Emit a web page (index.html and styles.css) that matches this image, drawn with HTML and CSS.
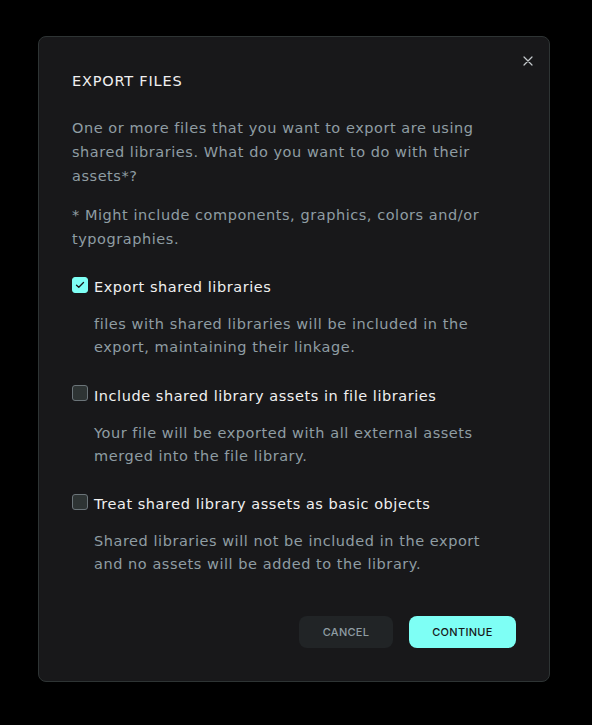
FILE: index.html
```html
<!DOCTYPE html>
<html lang="en">
<head>
<meta charset="utf-8">
<link rel="stylesheet" href="styles.css">
</head>
<body>
<div class="modal">
  <button class="close" aria-label="Close">
    <svg width="10" height="10" viewBox="0 0 10 10"><path d="M1 1L9 9M9 1L1 9" stroke="#c4c9cc" stroke-width="1.2" stroke-linecap="round"/></svg>
  </button>
  <h2 class="title">EXPORT FILES</h2>
  <p class="text">One or more files that you want to export are using shared libraries. What do you want to do with their assets*?</p>
  <p class="text note">* Might include components, graphics, colors and/or typographies.</p>
  <div class="options">
    <div class="option">
      <div class="label-row">
        <span class="check checked">
          <svg width="10" height="8" viewBox="0 0 10 8"><path d="M1.5 4.2L3.8 6.3L8.5 1.5" fill="none" stroke="#18181a" stroke-width="1.3" stroke-linecap="round" stroke-linejoin="round"/></svg>
        </span>
        <span class="label">Export shared libraries</span>
      </div>
      <p class="desc">files with shared libraries will be included in the export, maintaining their linkage.</p>
    </div>
    <div class="option">
      <div class="label-row">
        <span class="check"></span>
        <span class="label">Include shared library assets in file libraries</span>
      </div>
      <p class="desc">Your file will be exported with all external assets merged into the file library.</p>
    </div>
    <div class="option">
      <div class="label-row">
        <span class="check"></span>
        <span class="label">Treat shared library assets as basic objects</span>
      </div>
      <p class="desc">Shared libraries will not be included in the export and no assets will be added to the library.</p>
    </div>
  </div>
  <div class="actions">
    <button class="btn cancel">CANCEL</button>
    <button class="btn primary">CONTINUE</button>
  </div>
</div>
</body>
</html>
```
FILE: styles.css
```css
html, body {
  margin: 0;
  padding: 0;
  background: #000;
}
body {
  width: 592px;
  height: 725px;
  font-family: "DejaVu Sans", "Open Sans", sans-serif;
  overflow: hidden;
}
.modal {
  position: relative;
  box-sizing: border-box;
  margin: 36px 0 0 38px;
  width: 512px;
  height: 646px;
  background: #18181a;
  border: 1px solid #2e3434;
  border-radius: 8px;
  padding: 32px 33px 0 33px;
}
.close {
  position: absolute;
  top: 16px;
  right: 13px;
  width: 16px;
  height: 16px;
  padding: 0;
  border: 0;
  background: transparent;
  display: flex;
  align-items: center;
  justify-content: center;
}
.title {
  margin: 0 0 23px 0;
  font-size: 14.5px;
  line-height: 24px;
  font-weight: 400;
  color: #f0f0f0;
  letter-spacing: 0.8px;
}
.text {
  margin: 0;
  font-size: 14.5px;
  line-height: 24px;
  letter-spacing: 0.55px;
  color: #8f9da3;
  width: 430px;
}
.note {
  margin-top: 15px;
}
.options {
  display: flex;
  flex-direction: column;
  gap: 24.5px;
  margin-top: 24px;
}
.label-row {
  display: flex;
  align-items: center;
  gap: 6px;
  height: 24px;
}
.check {
  box-sizing: border-box;
  width: 16px;
  height: 16px;
  border: 1px solid #6b7479;
  border-radius: 3px;
  background: #2e3434;
  display: flex;
  align-items: center;
  justify-content: center;
  margin-top: -5px;
}
.check.checked {
  background: #7efff5;
  border-color: #7efff5;
}
.label {
  font-size: 14.5px;
  line-height: 24px;
  letter-spacing: 0.55px;
  color: #f0f0f0;
}
.desc {
  margin: 14px 0 0 22px;
  font-size: 14.5px;
  line-height: 23px;
  letter-spacing: 0.55px;
  color: #8f9da3;
  width: 410px;
}
.actions {
  display: flex;
  justify-content: flex-end;
  gap: 16px;
  margin-top: 40px;
}
.btn {
  height: 32px;
  border: 0;
  border-radius: 8px;
  font-family: "Inter", "Liberation Sans", sans-serif;
  font-size: 11px;
  font-weight: 500;
  letter-spacing: 0.3px;
  padding: 0;
}
.cancel {
  width: 94px;
  background: #212426;
  color: #8f9da3;
}
.primary {
  width: 107px;
  background: #7efff5;
  color: #18181a;
}
```
